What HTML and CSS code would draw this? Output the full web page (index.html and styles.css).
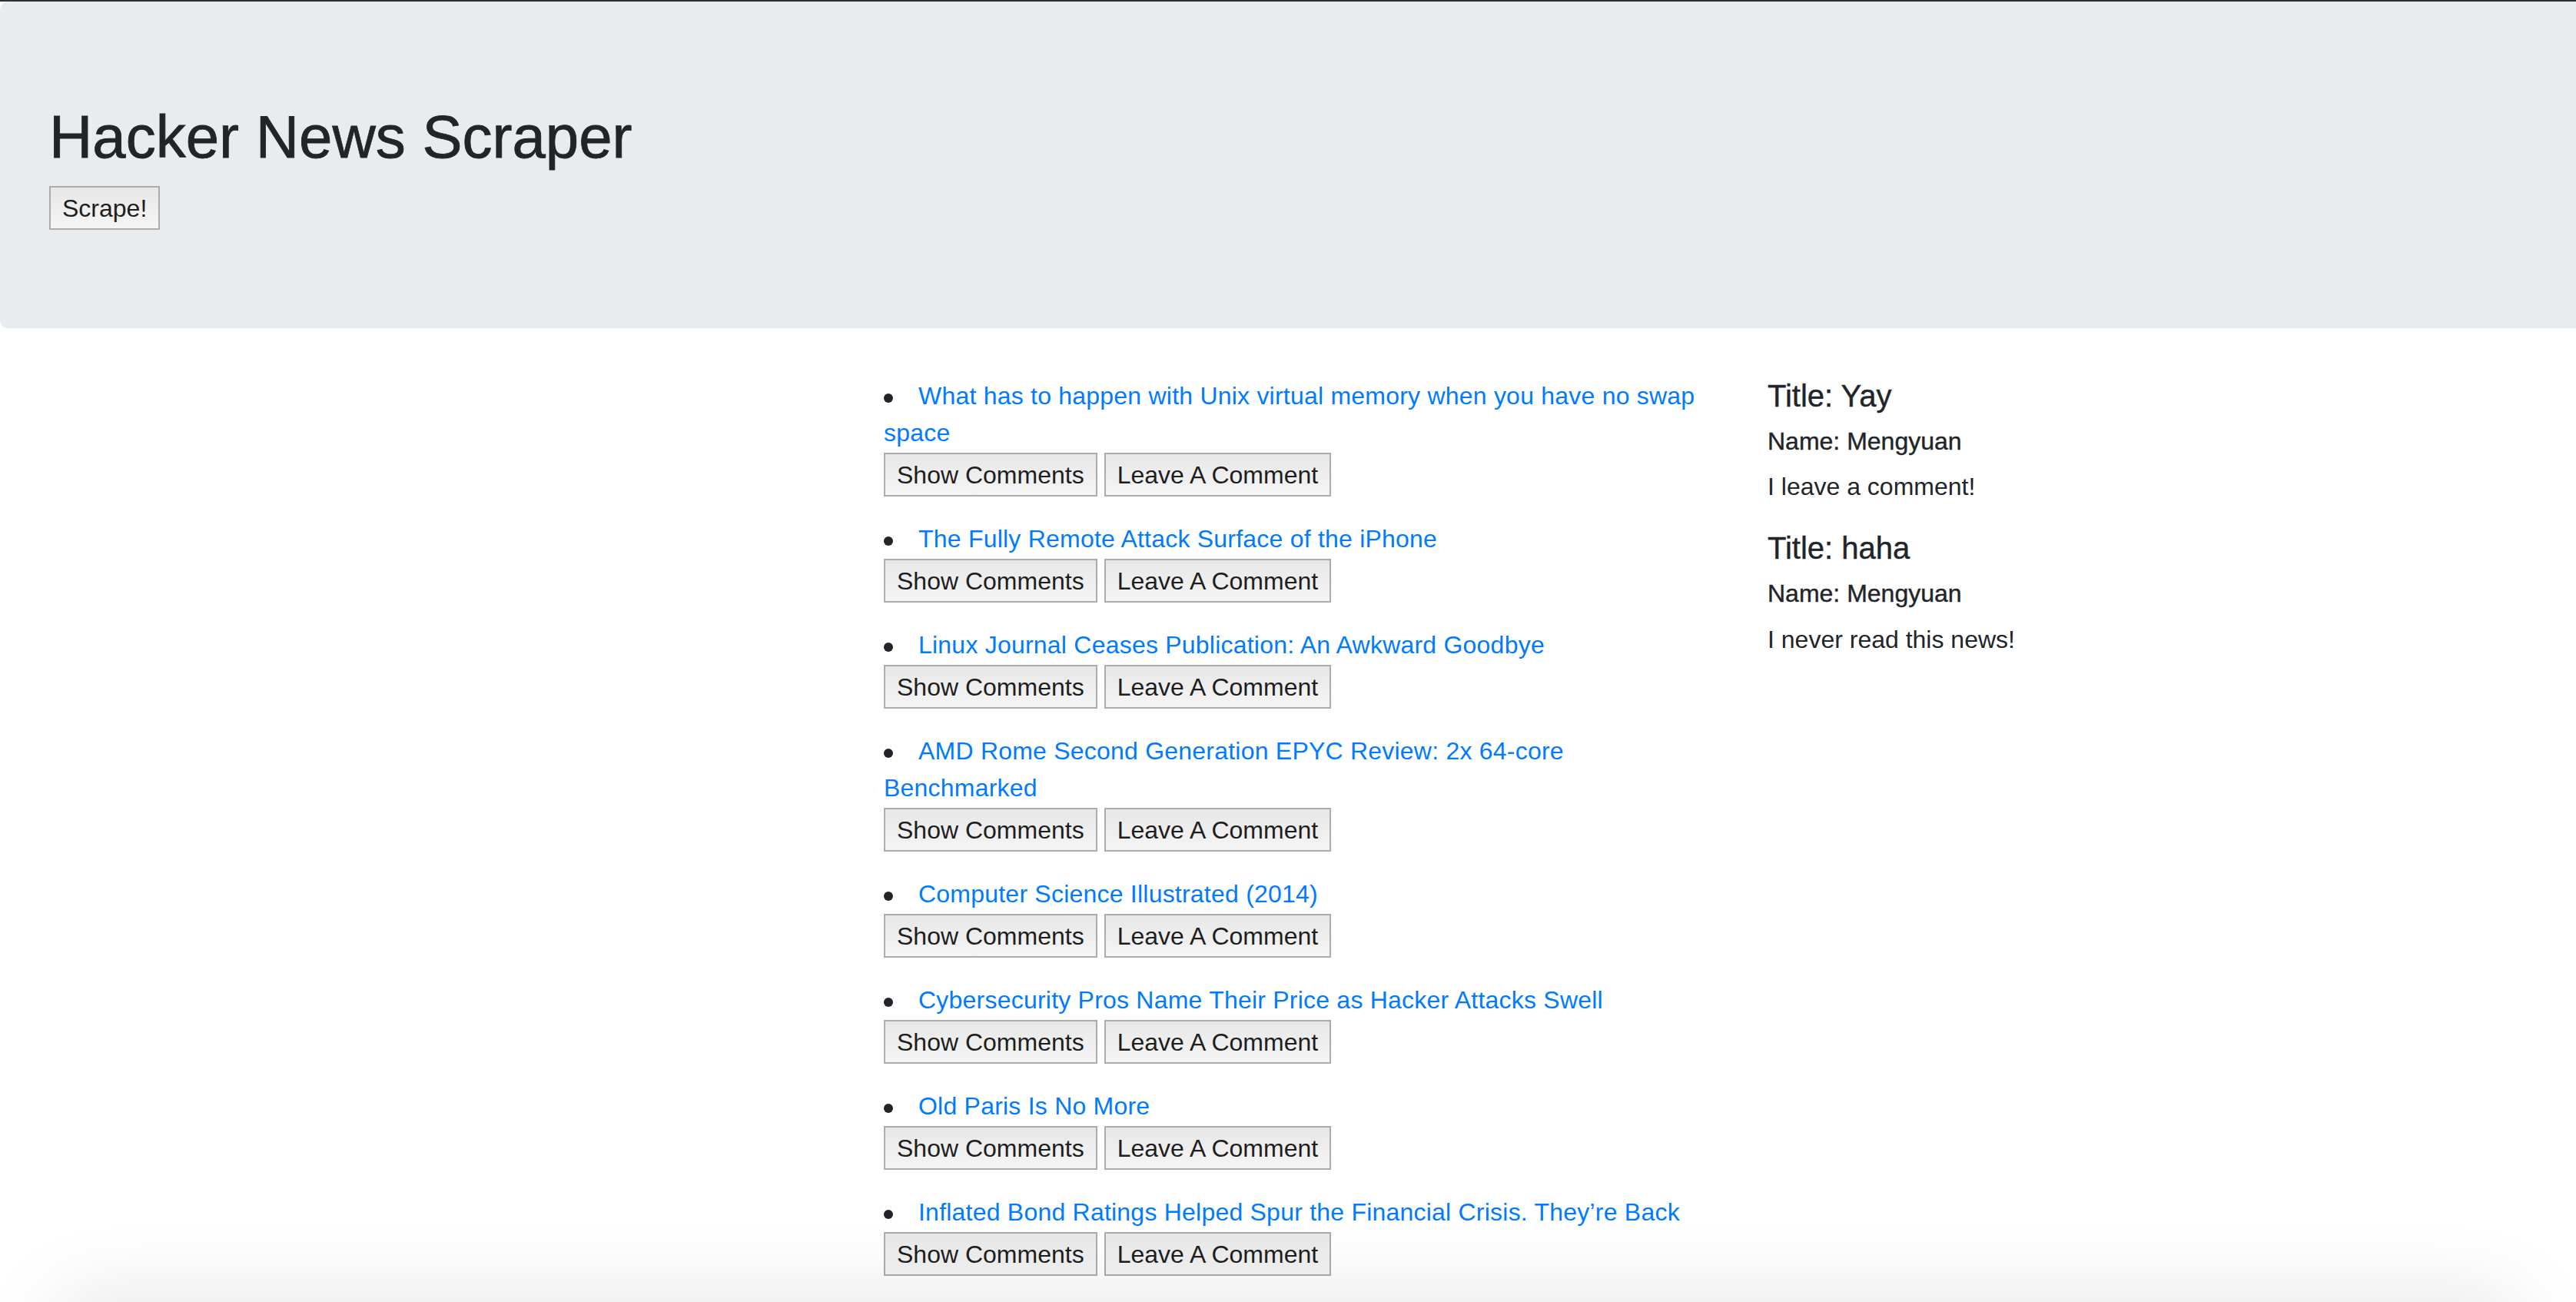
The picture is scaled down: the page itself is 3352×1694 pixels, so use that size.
FILE: index.html
```html
<!DOCTYPE html>
<html lang="en">
<head>
<meta charset="utf-8">
<title>Hacker News Scraper</title>
<link rel="stylesheet" href="styles.css">
</head>
<body>
<div class="topline"></div>
<header class="jumbotron">
  <h1 class="title">Hacker News Scraper</h1>
  <button class="btn" type="button">Scrape!</button>
</header>
<main class="main">
  <div class="spacer"></div>
  <ul class="news">
    <li class="item"><a class="link" href="#">What has to happen with Unix virtual memory when you have no swap space</a><div class="actions"><button class="btn" type="button">Show Comments</button><button class="btn" type="button">Leave A Comment</button></div></li>
    <li class="item"><a class="link" href="#">The Fully Remote Attack Surface of the iPhone</a><div class="actions"><button class="btn" type="button">Show Comments</button><button class="btn" type="button">Leave A Comment</button></div></li>
    <li class="item"><a class="link" href="#">Linux Journal Ceases Publication: An Awkward Goodbye</a><div class="actions"><button class="btn" type="button">Show Comments</button><button class="btn" type="button">Leave A Comment</button></div></li>
    <li class="item"><a class="link" href="#">AMD Rome Second Generation EPYC Review: 2x 64-core Benchmarked</a><div class="actions"><button class="btn" type="button">Show Comments</button><button class="btn" type="button">Leave A Comment</button></div></li>
    <li class="item"><a class="link" href="#">Computer Science Illustrated (2014)</a><div class="actions"><button class="btn" type="button">Show Comments</button><button class="btn" type="button">Leave A Comment</button></div></li>
    <li class="item"><a class="link" href="#">Cybersecurity Pros Name Their Price as Hacker Attacks Swell</a><div class="actions"><button class="btn" type="button">Show Comments</button><button class="btn" type="button">Leave A Comment</button></div></li>
    <li class="item"><a class="link" href="#">Old Paris Is No More</a><div class="actions"><button class="btn" type="button">Show Comments</button><button class="btn" type="button">Leave A Comment</button></div></li>
    <li class="item"><a class="link" href="#">Inflated Bond Ratings Helped Spur the Financial Crisis. They’re Back</a><div class="actions"><button class="btn" type="button">Show Comments</button><button class="btn" type="button">Leave A Comment</button></div></li>
  </ul>
  <aside class="comments">
    <div class="comment">
      <h5 class="c-title">Title: Yay</h5>
      <h6 class="c-name">Name: Mengyuan</h6>
      <p class="c-body">I leave a comment!</p>
    </div>
    <div class="comment">
      <h5 class="c-title">Title: haha</h5>
      <h6 class="c-name">Name: Mengyuan</h6>
      <p class="c-body">I never read this news!</p>
    </div>
  </aside>
</main>
<div class="bottom-shadow"></div>
</body>
</html>
```
FILE: styles.css
```css
html, body {
  margin: 0;
  padding: 0;
  background: #ffffff;
}
body {
  font-family: "Liberation Sans", Arial, Helvetica, sans-serif;
  font-size: 32px;
  line-height: 48px;
  color: #212529;
}
.topline {
  height: 2px;
  background: #2d3135;
}
.jumbotron {
  background: #e9ecef;
  border-radius: 10px 0 0 10px;
  padding: 128px 64px;
  margin: 0 0 64px 0;
}
.title {
  font-size: 78px;
  line-height: 96px;
  font-weight: 500;
  margin: 0 0 16px 0;
  color: #212529;
  -webkit-text-stroke: 0.8px #212529;
}
.btn {
  font-family: inherit;
  font-size: 32px;
  line-height: 48px;
  color: #1e1e1e;
  background: linear-gradient(#e7e7e7, #f5f5f5);
  border: 2px solid #acacac;
  border-radius: 0;
  padding: 3px 15px 2px;
  margin: 0;
  display: inline-block;
  cursor: pointer;
}
.main {
  display: grid;
  grid-template-columns: 1150px 1150px 1fr;
}
.news {
  list-style: none;
  margin: 0;
  padding: 0 84px 0 0;
}
.item::before {
  content: "";
  display: inline-block;
  width: 12px;
  height: 12px;
  border-radius: 50%;
  background: #212529;
  margin-right: 33px;
  vertical-align: middle;
}
.link {
  color: #007bff;
  text-decoration: none;
  letter-spacing: 0.22px;
}
.actions {
  display: flex;
  gap: 9px;
  margin: 2px 0 31px 0;
}
.comments {
  padding: 0;
}
.c-title {
  font-size: 40px;
  line-height: 48px;
  font-weight: 500;
  margin: 0 0 16px 0;
  -webkit-text-stroke: 0.4px #212529;
}
.c-name {
  font-size: 32px;
  line-height: 38.4px;
  font-weight: 500;
  margin: 0 0 16px 0;
  -webkit-text-stroke: 0.4px #212529;
}
.c-body {
  margin: 0 0 32px 0;
}
.bottom-shadow {
  position: fixed;
  left: 70px;
  right: 70px;
  top: 100%;
  height: 80px;
  border-radius: 40px;
  box-shadow: 0 0 110px 0 rgba(0, 0, 0, 0.13);
  pointer-events: none;
}
```
